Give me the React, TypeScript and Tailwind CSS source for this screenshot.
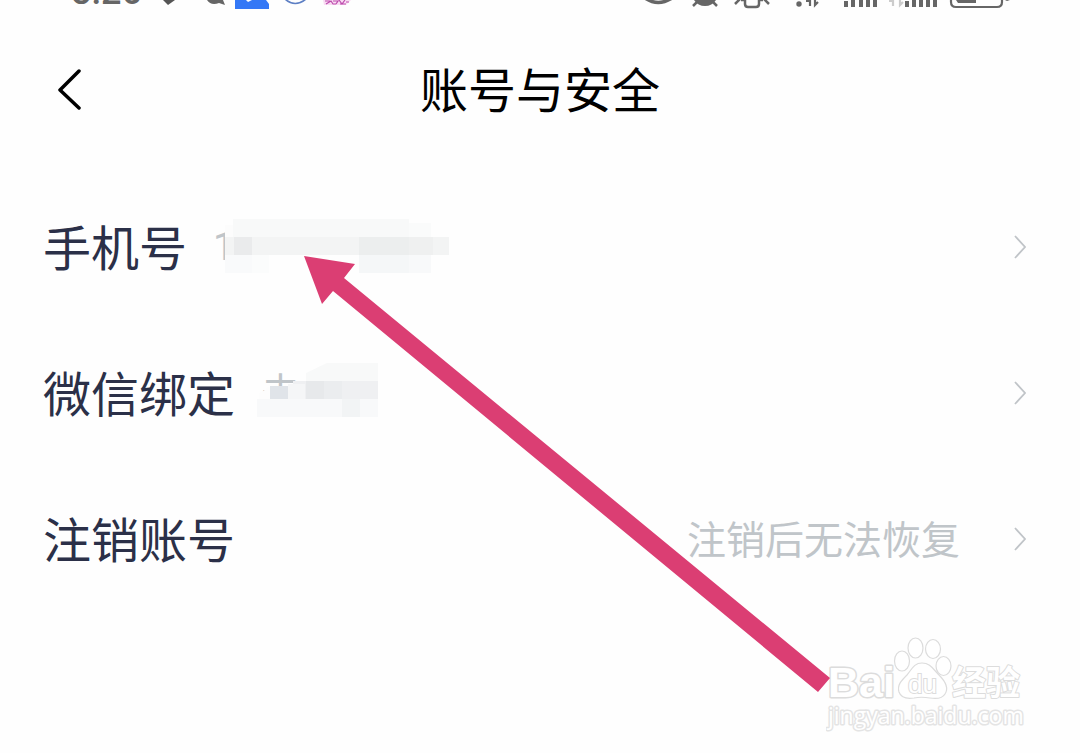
import { ReactNode } from 'react';

const ChevronRight = () => (
    <svg
        className="h-6 w-3 shrink-0"
        viewBox="0 0 12 24"
        fill="none"
        stroke="#c0c4c8"
        strokeWidth="1.8"
        aria-hidden="true"
    >
        <path d="M1 1L11 12L1 23" />
    </svg>
);

const PhoneMask = () => (
    <svg
        className="absolute -top-[3px] left-2 h-[60px] w-[230px]"
        viewBox="0 -1 230 60"
        aria-hidden="true"
    >
        <rect x="12" y="4" width="176" height="18" fill="#f8f9f9" />
        <rect x="188" y="8" width="22" height="14" fill="#fafbfb" />
        <rect x="4" y="10" width="8" height="44" fill="#fcfcfc" />
        <rect x="4" y="40" width="27" height="18" fill="#f9fafb" />
        <rect x="31" y="40" width="17" height="18" fill="#fbfcfc" />
        <rect x="138" y="40" width="50" height="18" fill="#f5f7f8" />
        <rect x="188" y="40" width="22" height="18" fill="#f8f9fa" />
        <rect x="4" y="22" width="224" height="18" fill="#f3f4f4" />
        <rect x="13" y="22" width="18" height="18" fill="#eaebec" />
        <rect x="138" y="22" width="50" height="18" fill="#eceeee" />
        <rect x="188" y="22" width="24" height="18" fill="#eff0f0" />
    </svg>
);

const NameMask = () => (
    <svg
        className="absolute -top-[3px] -left-1 h-[60px] w-[122px]"
        viewBox="-4 0 122 60"
        aria-hidden="true"
    >
        <path d="M-2 34L8 27H40V40H-2Z" fill="#fdfdfd" />
        <rect x="-4" y="39" width="121" height="18" fill="#f8f9fa" />
        <path d="M45 21V13L66 3H117V21Z" fill="#f8f9f9" />
        <rect x="32" y="21" width="85" height="18" fill="#eff0f2" />
        <rect x="9" y="26" width="18" height="13" fill="#e0e4e9" />
        <rect x="27" y="24" width="17" height="15" fill="#f5f6f7" />
        <rect x="45" y="21" width="18" height="18" fill="#e7e9eb" />
        <rect x="63" y="21" width="18" height="18" fill="#ebedef" />
        <rect x="81" y="39" width="18" height="18" fill="#f2f4f5" />
    </svg>
);

const rows: {
    label: string;
    value?: string;
    hint?: string;
    mask?: ReactNode;
}[] = [
    { label: '手机号', value: '1', mask: <PhoneMask /> },
    { label: '微信绑定', value: '未', mask: <NameMask /> },
    { label: '注销账号', hint: '注销后无法恢复' },
];

const StatusBar = () => (
    <div className="flex h-[10px] items-end justify-between overflow-hidden pr-[66px] pl-[71px]">
        <div className="flex items-end">
            <div className="h-[42px] w-[69px] font-[Roboto] text-[36px] leading-[48px] font-medium text-[#666]">
                8:26
            </div>
            <svg
                className="h-[10px] w-[215px]"
                viewBox="140 0 215 10"
                aria-hidden="true"
            >
                <path d="M163 0H175L168 5L164 1Z" fill="#555" />
                <path d="M207 0H223L225 5L219 3Q211 6 207 0Z" fill="#666" />
                <path d="M235 0H266L269 4V9H235Z" fill="#3478f6" />
                <path d="M246 0H252L248 2Z" fill="#fff" />
                <path
                    d="M285 -1Q295 8 306 -1"
                    fill="none"
                    stroke="#5d7fc4"
                    strokeWidth="1.6"
                />
                <path d="M323 0H351L346 5H324Z" fill="#f9dcf3" />
                <path
                    d="M325 1H330M326 4L331 1L333 4H336M333 1H338L336 4M339 0L342 4L345 0M346 2H349M340 4H346"
                    fill="none"
                    stroke="#bd4cae"
                    strokeWidth="1.2"
                />
            </svg>
        </div>
        <svg
            className="h-[10px] w-[374px]"
            viewBox="640 0 374 10"
            fill="none"
            stroke="#666"
            aria-hidden="true"
        >
            <path d="M645 -2Q658 7 672 -2" strokeWidth="3.5" />
            <path d="M694 0H716Q712 6 705 6Q698 6 694 0Z" fill="#666" stroke="none" />
            <path d="M698 1L693 6M712 1L717 6" strokeWidth="2.5" />
            <path d="M740 -1L735 4M764 -1L769 4" strokeWidth="2.5" />
            <path d="M745 -2V4Q745 7 748 7H756Q759 7 759 4V-2M741 0H745M759 0H763" strokeWidth="2.5" />
            <circle cx="799" cy="4" r="2.7" fill="#666" stroke="none" />
            <path d="M806 1H810V6M815 0V5L818 2" strokeWidth="2.2" />
            <path
                d="M846 1V7M853 0V7M861 0V7M868 0V7M875 0V7"
                strokeWidth="4"
            />
            <path
                d="M889 1H893V6M900 0V5L903 2"
                stroke="#ccc"
                strokeWidth="2.2"
            />
            <path
                d="M907 1V7M914 0V7M921 0V7M928 0V7M935 0V7"
                strokeWidth="4"
            />
            <path
                d="M951 -1V2Q951 7 956 7H997Q1002 7 1002 2V-1"
                strokeWidth="2.2"
            />
            <path d="M956 0H976V3H958Z" fill="#666" stroke="none" />
            <path d="M1005 0H1010L1007 1Z" fill="#666" stroke="none" />
        </svg>
    </div>
);

const Watermark = () => (
    <svg
        className="absolute right-[54px] bottom-5 h-[100px] w-[200px]"
        viewBox="826 633 200 100"
        fill="#fff"
        stroke="#dcdcdc"
        strokeWidth="1.2"
        aria-label="Baidu 经验"
    >
        <g strokeLinejoin="round" paintOrder="stroke">
            <text
                x="828"
                y="697"
                className="font-['Liberation_Sans'] text-[43px] font-bold"
                strokeWidth="3"
            >
                Bai
            </text>
            <text
                x="952"
                y="695"
                className="font-['Noto_Sans_CJK_SC',sans-serif] text-[34px] font-bold"
                strokeWidth="2"
            >
                经验
            </text>
            <text
                x="828"
                y="724"
                className="font-['Open_Sans'] text-[23px]"
                stroke="#e4e4e4"
                strokeWidth="3"
            >
                jingyan.baidu.com
            </text>
        </g>
        <ellipse cx="902" cy="661" rx="7.5" ry="10" />
        <ellipse cx="915.5" cy="648" rx="7.5" ry="10" />
        <ellipse cx="933" cy="649" rx="7.5" ry="9.5" />
        <ellipse cx="943.5" cy="666" rx="7.5" ry="9.5" />
        <path d="M922 663C930 663 933 669 939 675C946 682 949 688 945 694C942 699 936 699 930 698C924 697 919 697 914 698C907 699 901 698 899 692C897 685 901 681 907 675C912 669 914 663 922 663Z" />
        <text
            x="908"
            y="693"
            className="font-['Liberation_Sans'] text-[26px]"
            paintOrder="stroke"
            strokeWidth="2"
        >
            du
        </text>
    </svg>
);

const App = () => {
    return (
        <div className="relative min-h-screen overflow-hidden bg-[#fefefe] font-['Noto_Sans_CJK_SC',sans-serif]">
            <StatusBar />
            <header className="grid h-40 grid-cols-[1fr_auto_1fr] items-center px-[57px]">
                <button
                    type="button"
                    aria-label="返回"
                    className="justify-self-start"
                >
                    <svg
                        className="h-[42px] w-6"
                        viewBox="0 0 24 42"
                        fill="none"
                        stroke="#000"
                        strokeWidth="3.5"
                        strokeLinecap="round"
                        strokeLinejoin="round"
                    >
                        <path d="M22 2L3 21L22 39" />
                    </svg>
                </button>
                <h1 className="pb-[6px] text-[48px] leading-[60px] text-black">
                    账号与安全
                </h1>
            </header>
            <main className="pt-1">
                {rows.map((row) => (
                    <button
                        key={row.label}
                        type="button"
                        className="flex h-[146px] w-full items-center pr-[54px] pl-[43px] text-left text-[39px] leading-[60px] text-[#c0c5c9]"
                    >
                        <span className="pb-1 text-[48px] text-[#2b3048]">
                            {row.label}
                        </span>
                        {row.value && (
                            <span className="relative ml-[26px] font-[Roboto,'Noto_Sans_CJK_SC',sans-serif]">
                                {row.value}
                                {row.mask}
                            </span>
                        )}
                        <span className="mr-[54px] ml-auto pb-1">
                            {row.hint}
                        </span>
                        <ChevronRight />
                    </button>
                ))}
            </main>
            <Watermark />
            <svg
                className="pointer-events-none absolute top-[256px] left-[304px] h-[437px] w-[527px]"
                viewBox="304 256 527 437"
                aria-hidden="true"
            >
                <path
                    d="M304 256L355 264L344 278L830 678L818 692L333 291L322 304Z"
                    fill="#db3e73"
                />
            </svg>
        </div>
    );
};

export default App;
